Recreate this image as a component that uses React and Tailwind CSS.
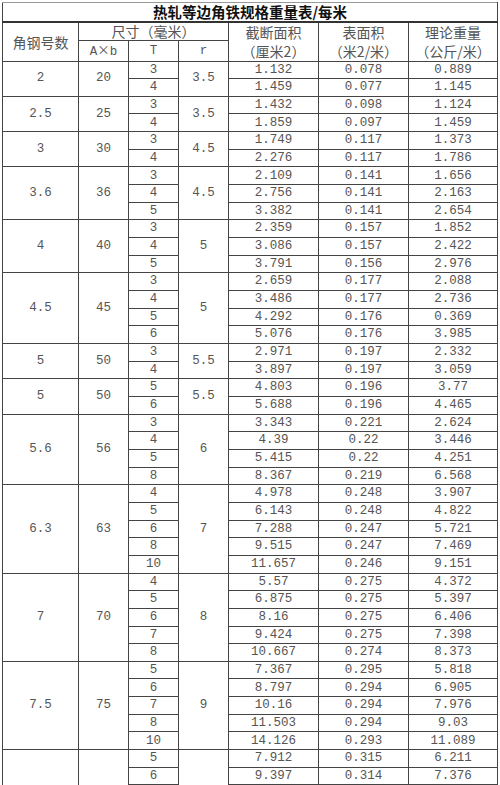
const GROUPS = [
  { no: "2", ab: "20", r: "3.5", rows: [["3", "1.132", "0.078", "0.889"], ["4", "1.459", "0.077", "1.145"]] },
  { no: "2.5", ab: "25", r: "3.5", rows: [["3", "1.432", "0.098", "1.124"], ["4", "1.859", "0.097", "1.459"]] },
  { no: "3", ab: "30", r: "4.5", rows: [["3", "1.749", "0.117", "1.373"], ["4", "2.276", "0.117", "1.786"]] },
  {
    no: "3.6", ab: "36", r: "4.5",
    rows: [["3", "2.109", "0.141", "1.656"], ["4", "2.756", "0.141", "2.163"], ["5", "3.382", "0.141", "2.654"]],
  },
  {
    no: "4", ab: "40", r: "5",
    rows: [["3", "2.359", "0.157", "1.852"], ["4", "3.086", "0.157", "2.422"], ["5", "3.791", "0.156", "2.976"]],
  },
  {
    no: "4.5", ab: "45", r: "5",
    rows: [
      ["3", "2.659", "0.177", "2.088"],
      ["4", "3.486", "0.177", "2.736"],
      ["5", "4.292", "0.176", "0.369"],
      ["6", "5.076", "0.176", "3.985"],
    ],
  },
  { no: "5", ab: "50", r: "5.5", rows: [["3", "2.971", "0.197", "2.332"], ["4", "3.897", "0.197", "3.059"]] },
  { no: "5", ab: "50", r: "5.5", rows: [["5", "4.803", "0.196", "3.77"], ["6", "5.688", "0.196", "4.465"]] },
  {
    no: "5.6", ab: "56", r: "6",
    rows: [
      ["3", "3.343", "0.221", "2.624"],
      ["4", "4.39", "0.22", "3.446"],
      ["5", "5.415", "0.22", "4.251"],
      ["8", "8.367", "0.219", "6.568"],
    ],
  },
  {
    no: "6.3", ab: "63", r: "7",
    rows: [
      ["4", "4.978", "0.248", "3.907"],
      ["5", "6.143", "0.248", "4.822"],
      ["6", "7.288", "0.247", "5.721"],
      ["8", "9.515", "0.247", "7.469"],
      ["10", "11.657", "0.246", "9.151"],
    ],
  },
  {
    no: "7", ab: "70", r: "8",
    rows: [
      ["4", "5.57", "0.275", "4.372"],
      ["5", "6.875", "0.275", "5.397"],
      ["6", "8.16", "0.275", "6.406"],
      ["7", "9.424", "0.275", "7.398"],
      ["8", "10.667", "0.274", "8.373"],
    ],
  },
  {
    no: "7.5", ab: "75", r: "9",
    rows: [
      ["5", "7.367", "0.295", "5.818"],
      ["6", "8.797", "0.294", "6.905"],
      ["7", "10.16", "0.294", "7.976"],
      ["8", "11.503", "0.294", "9.03"],
      ["10", "14.126", "0.293", "11.089"],
    ],
  },
  // the 8 group runs past the bottom of the page; only its first two rows show
  { no: "", ab: "", r: "", open: true, rows: [["5", "7.912", "0.315", "6.211"], ["6", "9.397", "0.314", "7.376"]] },
];

const cell = "border border-[#444] p-0 text-center align-middle leading-none";
const cjk = "font-['Noto_Sans_CJK_SC',sans-serif] text-[14px] font-normal text-[#555]";
const num = "font-['Liberation_Mono','Noto_Sans_CJK_SC',monospace] text-[12.5px] text-[#555]";

function HeadPair({ top, bottom }) {
  return (
    <th rowSpan={2} className={`${cell} ${cjk}`}>
      <div className="flex h-[19px] items-center justify-center">{top}</div>
      <div className="flex h-[19px] items-center justify-center">{bottom}</div>
    </th>
  );
}

export default function App() {
  return (
    <div className="h-[785px] w-[500px] overflow-hidden bg-white">
      <table className="ml-[2px] mt-[2px] w-[495px] table-fixed border-collapse">
        <colgroup>
          <col className="w-[76px]" />
          <col className="w-[50px]" />
          <col className="w-[50px]" />
          <col className="w-[50px]" />
          <col className="w-[90px]" />
          <col className="w-[90px]" />
          <col className="w-[89px]" />
        </colgroup>
        <thead>
          <tr className="h-[19px]">
            <th
              colSpan={7}
              className={`${cell} border-b-2 border-b-[#333] border-t-[#999] font-['Noto_Sans_CJK_SC',sans-serif] text-[14.5px] font-bold text-[#111]`}
            >
              热轧等边角铁规格重量表/每米
            </th>
          </tr>
          <tr className="h-[19px]">
            <th rowSpan={2} className={`${cell} ${cjk}`}>角钢号数</th>
            <th colSpan={3} className={`${cell} ${cjk}`}>尺寸（毫米）</th>
            <HeadPair top="截断面积" bottom="（厘米2）" />
            <HeadPair top="表面积" bottom="（米2/米）" />
            <HeadPair top="理论重量" bottom="（公斤/米）" />
          </tr>
          <tr className="h-[20px]">
            <th className={`${cell} ${num} font-normal`}>
              A<span className="font-['Noto_Sans_CJK_SC',sans-serif]">×</span>b
            </th>
            <th className={`${cell} ${num} font-normal`}>T</th>
            <th className={`${cell} ${num} font-normal`}>r</th>
          </tr>
        </thead>
        <tbody>
          {GROUPS.map((g, gi) =>
            g.rows.map((row, ri) => (
              <tr key={`${gi}-${ri}`} className="h-[17.67px]">
                {ri === 0 && (
                  <>
                    <td rowSpan={g.rows.length} className={`${cell} ${num} ${g.open ? "border-b-0" : ""}`}>{g.no}</td>
                    <td rowSpan={g.rows.length} className={`${cell} ${num} ${g.open ? "border-b-0" : ""}`}>{g.ab}</td>
                  </>
                )}
                <td className={`${cell} ${num}`}>{row[0]}</td>
                {ri === 0 && (
                  <td rowSpan={g.rows.length} className={`${cell} ${num} ${g.open ? "border-b-0" : ""}`}>{g.r}</td>
                )}
                <td className={`${cell} ${num}`}>{row[1]}</td>
                <td className={`${cell} ${num}`}>{row[2]}</td>
                <td className={`${cell} ${num}`}>{row[3]}</td>
              </tr>
            ))
          )}
        </tbody>
      </table>
    </div>
  );
}
